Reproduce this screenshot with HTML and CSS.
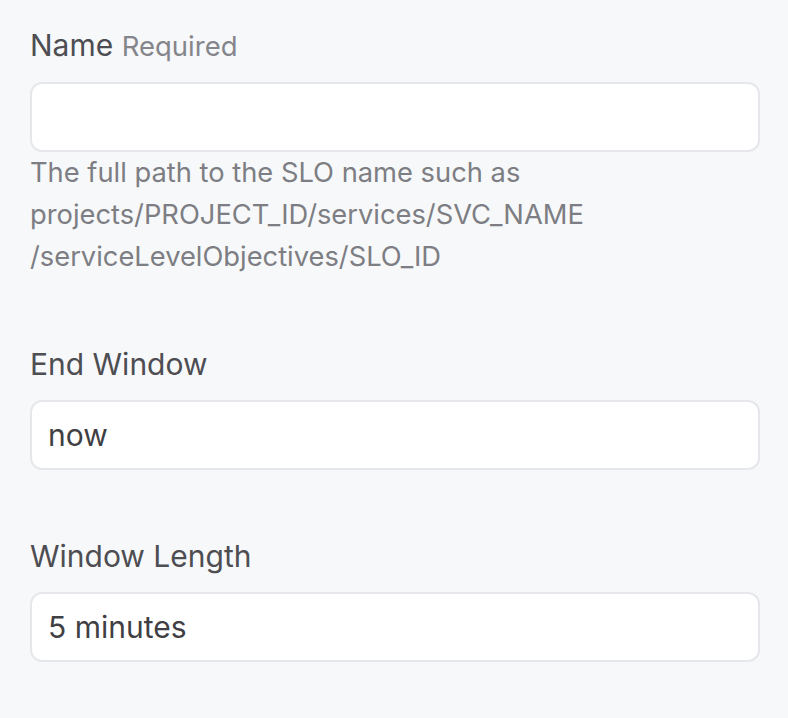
FILE: index.html
```html
<!DOCTYPE html>
<html>
<head>
<meta charset="utf-8">
<link rel="stylesheet" href="styles.css">
</head>
<body>
<form class="form">
  <div class="field">
    <label class="label">Name <span class="req">Required</span></label>
    <div class="input"></div>
    <p class="help">The full path to the SLO name such as projects/PROJECT_ID/services/SVC_NAME<br>/serviceLevelObjectives/SLO_ID</p>
  </div>
  <div class="field">
    <label class="label">End Window</label>
    <div class="input">now</div>
  </div>
  <div class="field">
    <label class="label">Window Length</label>
    <div class="input">5 minutes</div>
  </div>
</form>
</body>
</html>
```
FILE: styles.css
```css
html, body {
  margin: 0;
  padding: 0;
  background: #f7f8fa;
}
body {
  font-family: Inter, "Liberation Sans", sans-serif;
  color: #4a4a4f;
}
.form {
  padding: 25px 28px 0 30px;
  display: flex;
  flex-direction: column;
  gap: 66px;
}
.field {
  display: flex;
  flex-direction: column;
}
.label {
  font-size: 30px;
  line-height: 40px;
  color: #4d4d52;
  margin-bottom: 16px;
}
.req {
  font-size: 27.5px;
  color: #85868b;
}
.input {
  box-sizing: border-box;
  height: 70px;
  background: #fff;
  border: 2px solid #e6e7eb;
  border-radius: 12px;
  padding: 0 16px;
  font-size: 30px;
  line-height: 66px;
  color: #3f3f44;
}
.help {
  margin: 0;
  font-size: 27.3px;
  line-height: 42px;
  color: #7d7e83;
}
```
